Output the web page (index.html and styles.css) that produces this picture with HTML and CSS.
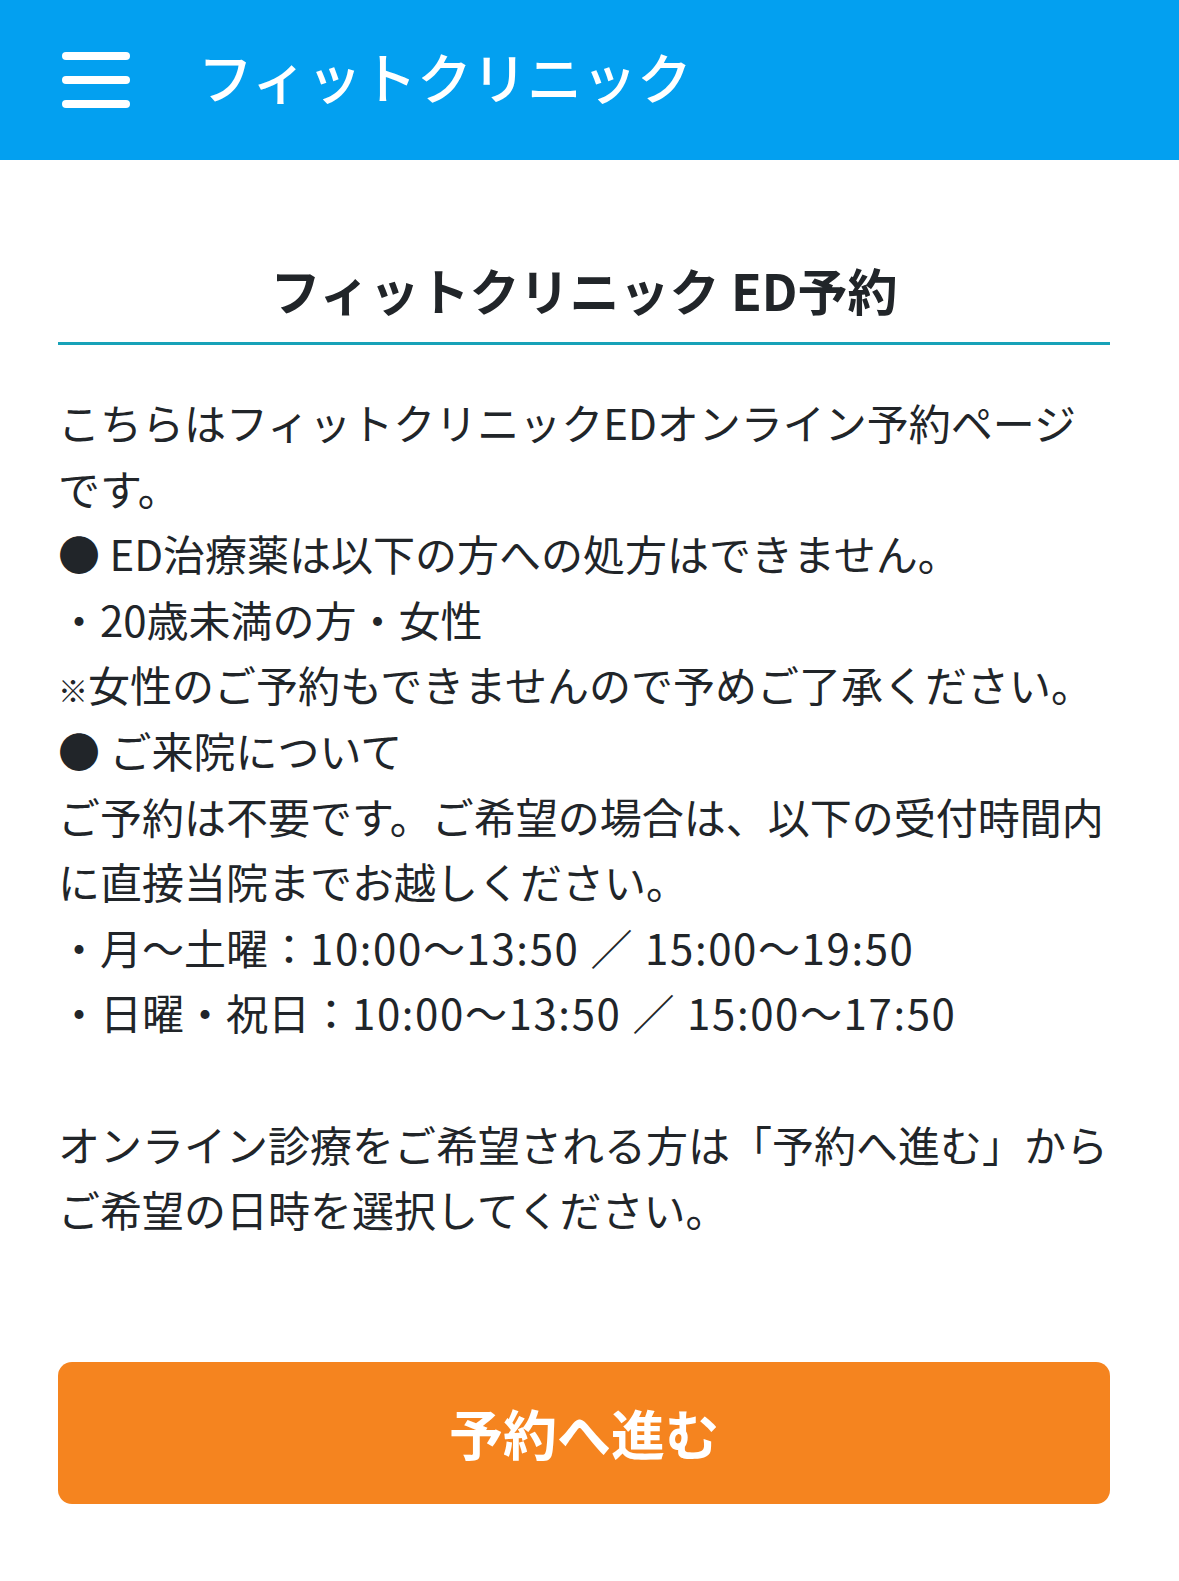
FILE: index.html
```html
<!DOCTYPE html>
<html lang="ja">
<head>
<meta charset="utf-8">
<title>フィットクリニック ED予約</title>
<link rel="stylesheet" href="styles.css">
</head>
<body>
<header class="topbar">
  <div class="burger" aria-label="メニュー">
    <span class="bar"></span><span class="bar"></span><span class="bar"></span>
  </div>
  <div class="brand">フィットクリニック</div>
</header>
<main class="content">
  <h1 class="title">フィットクリニック ED予約</h1>
  <div class="body-text">
    <p>こちらはフィットクリニックEDオンライン予約ページ<br>です。<br>● ED治療薬は以下の方への処方はできません。<br>・20歳未満の方・女性<br><span class="kome">※</span>女性のご予約もできませんので予めご了承ください。<br>● ご来院について<br>ご予約は不要です。ご希望の場合は、以下の受付時間内<br>に直接当院までお越しください。<br>・月〜土曜：<span class="time">10:00〜13:50 ／ 15:00〜19:50</span><br>・日曜・祝日：<span class="time">10:00〜13:50 ／ 15:00〜17:50</span></p>
    <p class="spaced">オンライン診療をご希望される方は「予約へ進む」から<br>ご希望の日時を選択してください。</p>
  </div>
  <a class="cta" href="#">予約へ進む</a>
</main>
</body>
</html>
```
FILE: styles.css
```css
* { box-sizing: border-box; }
html, body { margin: 0; padding: 0; }
body {
  background: #ffffff;
  color: #212529;
  font-family: "Noto Sans CJK JP", "Noto Sans", sans-serif;
}
.topbar {
  height: 160px;
  background: #03a0f0;
  display: flex;
  align-items: center;
  padding-left: 62px;
}
.burger {
  display: flex;
  flex-direction: column;
  gap: 16px;
  width: 68px;
}
.bar {
  display: block;
  height: 8px;
  border-radius: 4px;
  background: #ffffff;
}
.brand {
  margin-left: 68px;
  padding-bottom: 10px;
  color: #ffffff;
  font-size: 55px;
  font-weight: 500;
  line-height: 1;
  white-space: nowrap;
}
.content {
  margin-left: 58px;
  width: 1052px;
  display: flex;
  flex-direction: column;
}
.title {
  margin: 92px 0 0;
  padding-bottom: 15px;
  border-bottom: 3px solid #17a2b8;
  text-align: center;
  font-size: 50px;
  line-height: 75px;
  font-weight: 700;
  color: #212529;
}
.body-text {
  margin-top: 44px;
  font-size: 42px;
  line-height: 65.6px;
  white-space: nowrap;
}
.body-text p { margin: 0; }
.body-text .spaced { margin-top: 65.6px; }
.kome { font-size: 30px; line-height: 0; }
.time { letter-spacing: 1.6px; }
.cta {
  margin-top: 120px;
  height: 142px;
  border-radius: 14px;
  background: #f5841f;
  color: #ffffff;
  text-decoration: none;
  display: flex;
  align-items: center;
  justify-content: center;
  font-size: 54px;
  font-weight: 700;
}
```
